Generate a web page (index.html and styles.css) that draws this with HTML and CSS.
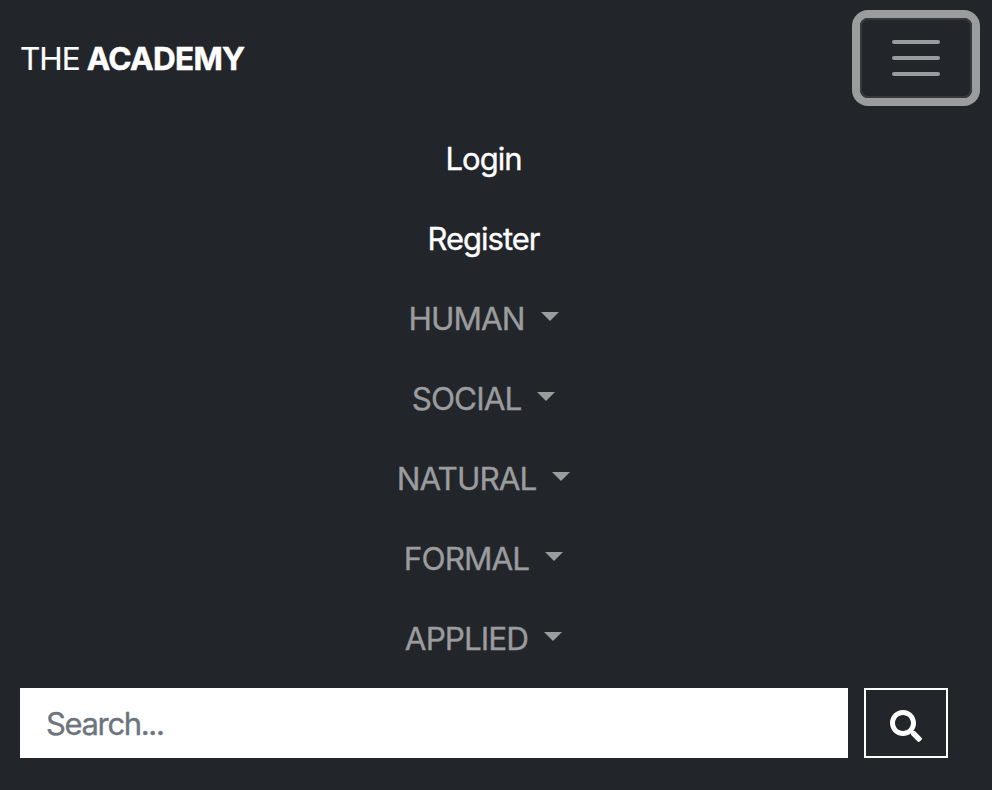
FILE: index.html
```html
<!DOCTYPE html>
<html lang="en">
<head>
<meta charset="utf-8">
<title>The Academy</title>
<link rel="stylesheet" href="styles.css">
</head>
<body>
<nav class="navbar">
  <header class="bar">
    <a class="brand"><span class="thin">THE</span> <b>ACADEMY</b></a>
    <button class="toggler" aria-label="Toggle navigation">
      <svg width="60" height="60" viewBox="0 0 30 30"><path stroke="#9b9c9e" stroke-linecap="round" stroke-width="2" d="M4 7h22M4 15h22M4 23h22"/></svg>
    </button>
  </header>
  <ul class="links">
    <li><a class="link active"><span>Login</span></a></li>
    <li><a class="link active"><span>Register</span></a></li>
    <li><a class="link"><span>HUMAN</span><i class="caret"></i></a></li>
    <li><a class="link"><span>SOCIAL</span><i class="caret"></i></a></li>
    <li><a class="link"><span>NATURAL</span><i class="caret"></i></a></li>
    <li><a class="link"><span>FORMAL</span><i class="caret"></i></a></li>
    <li><a class="link"><span>APPLIED</span><i class="caret"></i></a></li>
  </ul>
  <form class="search">
    <input class="field" type="text" placeholder="Search...">
    <button class="go" type="button" aria-label="Search">
      <svg width="32" height="32" viewBox="0 0 512 512"><path fill="#fff" d="M505 442.7L405.3 343c-4.500-4.500-10.600-7-17-7H372c27.600-35.300 44-79.700 44-128C416 93.100 322.900 0 208 0S0 93.100 0 208s93.100 208 208 208c48.300 0 92.700-16.400 128-44v16.300c0 6.400 2.500 12.500 7 17l99.700 99.700c9.400 9.400 24.600 9.400 33.900 0l28.300-28.300c9.400-9.400 9.400-24.600.1-34zM208 336c-70.700 0-128-57.200-128-128 0-70.700 57.200-128 128-128 70.700 0 128 57.200 128 128 0 70.700-57.200 128-128 128z"/></svg>
    </button>
  </form>
</nav>
</body>
</html>
```
FILE: styles.css
```css
* { box-sizing: border-box; }
body {
  margin: 0;
  background: #22252a;
  font-family: Inter, "Liberation Sans", sans-serif;
  font-size: 31.5px;
  color: #fff;
}
.navbar { height: 790px; overflow: hidden; }
.bar {
  height: 120px;
  padding: 18px 20px 22px;
  display: flex;
  justify-content: space-between;
  align-items: flex-start;
}
.brand { line-height: 82px; letter-spacing: -0.7px; word-spacing: -1px; white-space: nowrap; }
.thin { letter-spacing: -1px; -webkit-text-stroke: 0.2px; }
.brand b { -webkit-text-stroke: 0.5px; }
.toggler {
  width: 112px;
  height: 80px;
  padding: 0;
  display: flex;
  align-items: center;
  justify-content: center;
  background: none;
  border: 2px solid #37393d;
  border-radius: 8px;
  box-shadow: 0 0 0 8px #9b9c9e;
}
.links { list-style: none; margin: 0; padding: 0 25px 0 0; }
.link {
  height: 80px;
  padding-bottom: 4px;
  display: flex;
  align-items: center;
  justify-content: center;
  color: #9b9c9e;
  letter-spacing: -0.95px;
  -webkit-text-stroke: 0.35px;
}
.active { color: #fff; font-size: 31px; letter-spacing: -1px; }
.caret {
  margin: 0 0 3px 16px;
  border-top: 9.6px solid;
  border-left: 9.6px solid transparent;
  border-right: 9.6px solid transparent;
}
.search { display: flex; gap: 16px; padding: 8px 44px 0 20px; }
.field {
  flex: 1;
  min-width: 0;
  height: 70px;
  padding: 1px 26px 0;
  border: 0;
  border-radius: 0;
  background: #fff;
  font: inherit;
  font-size: 31px;
  letter-spacing: -1.35px;
}
.field::placeholder { color: #6c757d; opacity: 1; -webkit-text-stroke: 0.35px; }
.go {
  width: 84px;
  height: 70px;
  padding: 5px 0 0;
  display: flex;
  align-items: center;
  justify-content: center;
  background: none;
  border: 2px solid #fff;
}
```
